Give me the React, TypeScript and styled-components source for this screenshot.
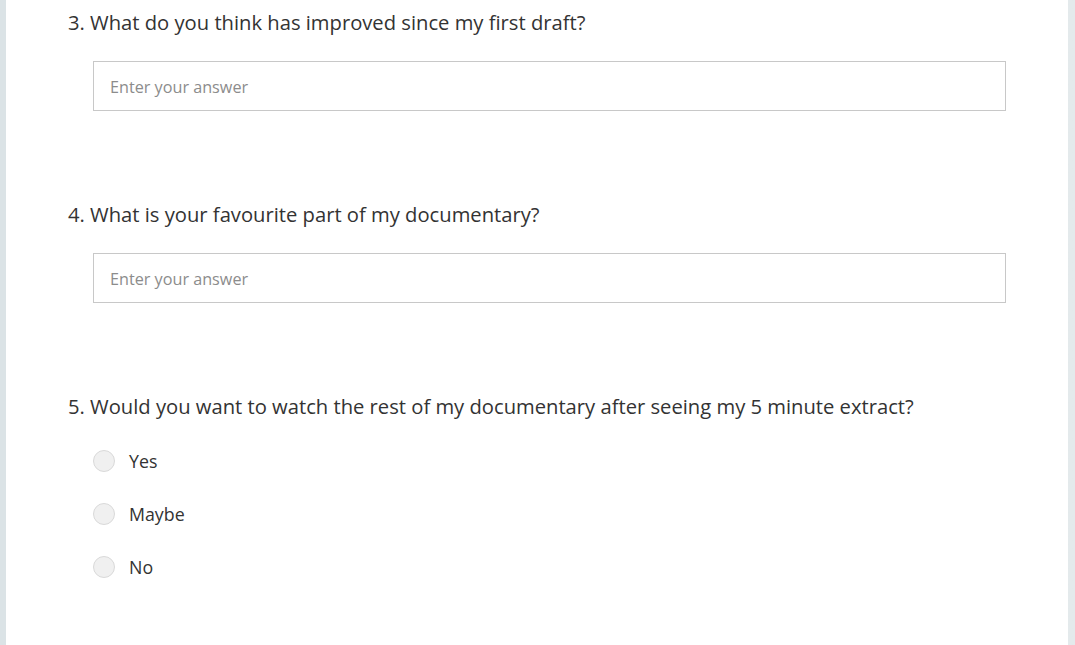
import React from "react";
import styled, { createGlobalStyle } from "styled-components";

const Global = createGlobalStyle`
  html, body { margin: 0; padding: 0; }
  body {
    background: #ffffff;
    font-family: "Open Sans", "Noto Sans", "Liberation Sans", sans-serif;
    color: #333333;
  }
`;

const Page = styled.div`
  display: flex;
  height: 645px;
  overflow: hidden;
  background: linear-gradient(90deg, #dbe3e6 0%, #e4eaec 100%);
  padding: 0 7px 0 6px;
  box-sizing: border-box;
`;

const Card = styled.main`
  flex: 1;
  background: #ffffff;
  padding: 8px 62px 0 62px;
  box-sizing: border-box;
`;

const Question = styled.section`
  display: flex;
  flex-direction: column;
  margin-bottom: 89px;
  &:last-child { margin-bottom: 0; }
`;

const Title = styled.div`
  font-size: 20.2px;
  line-height: 28px;
  height: 28px;
  color: #333333;
  white-space: nowrap;
`;

const Answer = styled.input`
  margin: 25px 0 0 25px;
  width: 913px;
  height: 50px;
  box-sizing: border-box;
  border: 1px solid #c8c8c8;
  padding: 1px 16px 0;
  font-family: inherit;
  font-size: 16.2px;
  color: #333;
  outline: none;
  background: #fff;
  &::placeholder { color: #8c8c8c; }
`;

const Options = styled.div`
  display: flex;
  flex-direction: column;
  margin: 14.5px 0 0 25px;
`;

const Option = styled.label`
  display: flex;
  align-items: center;
  height: 53px;
  gap: 14px;
  font-size: 17.8px;
  color: #333333;
  cursor: pointer;
`;

const Radio = styled.span`
  width: 22px;
  height: 22px;
  border-radius: 50%;
  box-sizing: border-box;
  border: 1px solid #d9d9d9;
  background: #f0f0f0;
  flex-shrink: 0;
`;

export default function App() {
  return (
    <>
      <Global />
      <Page>
        <Card>
          <Question>
            <Title>3. What do you think has improved since my first draft?</Title>
            <Answer placeholder="Enter your answer" />
          </Question>
          <Question>
            <Title>4. What is your favourite part of my documentary?</Title>
            <Answer placeholder="Enter your answer" />
          </Question>
          <Question>
            <Title>5. Would you want to watch the rest of my documentary after seeing my 5 minute extract?</Title>
            <Options>
              {["Yes", "Maybe", "No"].map((o) => (
                <Option key={o}>
                  <Radio />
                  {o}
                </Option>
              ))}
            </Options>
          </Question>
        </Card>
      </Page>
    </>
  );
}
